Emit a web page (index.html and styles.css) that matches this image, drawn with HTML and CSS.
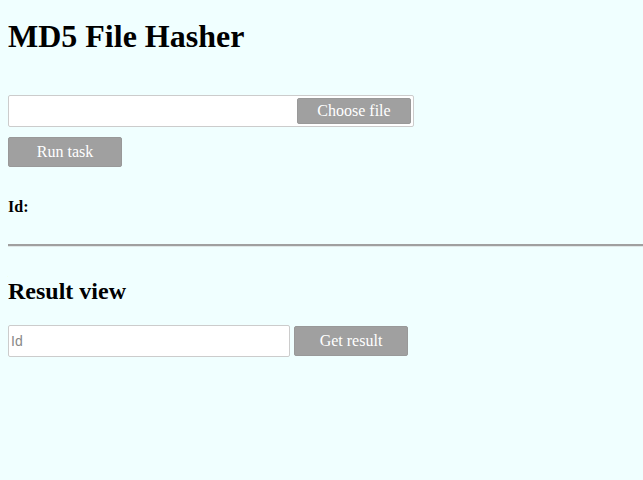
FILE: index.html
```html
<!DOCTYPE html>
<html>
<head>
<meta charset="utf-8">
<link rel="stylesheet" href="styles.css">
</head>
<body>
<h1 class="title">MD5 File Hasher</h1>
<form class="task-form">
  <div class="file-box">
    <span class="btn file-btn">Choose file</span>
  </div>
  <button type="button" class="btn run-btn">Run task</button>
</form>
<p class="id-line">Id:</p>
<div class="divider"></div>
<h2 class="subtitle">Result view</h2>
<div class="result-row">
  <input class="id-input" type="text" placeholder="Id">
  <button type="button" class="btn get-btn">Get result</button>
</div>
</body>
</html>
```
FILE: styles.css
```css
html, body {
  background: #f0ffff;
}
body {
  margin: 8px 0 8px 8px;
  font-family: "Liberation Serif", serif;
  color: #000;
}
.title {
  font-size: 32px;
  font-weight: bold;
  margin: 10px 0 0;
  line-height: 37px;
}
.task-form {
  margin-top: 40px;
  display: flex;
  flex-direction: column;
  align-items: flex-start;
  gap: 10px;
}
.file-box {
  box-sizing: border-box;
  width: 406px;
  height: 32px;
  background: #fff;
  border: 1px solid #ccc;
  border-radius: 2px;
  display: flex;
  justify-content: flex-end;
  align-items: center;
  padding-right: 2px;
}
.btn {
  box-sizing: border-box;
  background: #a0a0a0;
  color: #fff;
  font-family: "Liberation Serif", serif;
  font-size: 16px;
  border: 1px solid #999;
  border-radius: 2px;
  display: flex;
  align-items: center;
  justify-content: center;
  padding: 0;
}
.file-btn {
  width: 114px;
  height: 26px;
}
.run-btn {
  width: 114px;
  height: 30px;
}
.id-line {
  font-weight: bold;
  font-size: 16px;
  margin: 31px 0 0;
  line-height: 18px;
}
.divider {
  margin-top: 28px;
  height: 2px;
  background: #a0a0a0;
  border-bottom: 1px solid #e0e8e8;
}
.subtitle {
  font-size: 24px;
  font-weight: bold;
  margin: 30px 0 0;
  line-height: 28px;
}
.result-row {
  margin-top: 20px;
  display: flex;
  align-items: center;
  gap: 4px;
}
.id-input {
  box-sizing: border-box;
  width: 282px;
  height: 32px;
  background: #fff;
  border: 1px solid #ccc;
  border-radius: 2px;
  padding: 0 2px;
  font-family: "Liberation Sans", sans-serif;
  font-size: 14px;
  margin: 0;
}
.id-input::placeholder {
  color: #888;
}
.get-btn {
  width: 114px;
  height: 30px;
}
```
